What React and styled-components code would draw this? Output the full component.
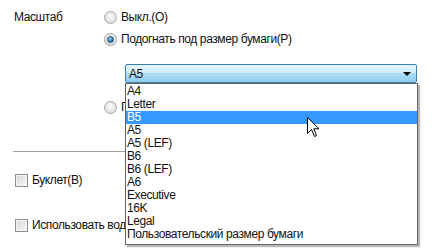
import React from 'react'
import styled, { createGlobalStyle } from 'styled-components'

const GlobalStyle = createGlobalStyle`
  body {
    margin: 0;
    background: #fff;
    font-family: "Liberation Sans", Arial, sans-serif;
    font-size: 12px;
    letter-spacing: -0.4px;
    color: #111;
  }
`;

const Page = styled.div`
  position: relative;
  width: 432px;
  height: 252px;
  overflow: hidden;
  padding: 10px 0 0 14px;
  box-sizing: border-box;
`;

const ScaleRow = styled.div`
  display: grid;
  grid-template-columns: 90px 1fr;
`;

const Label = styled.div`
  height: 14px;
  line-height: 14px;
`;

const Options = styled.div`
  display: flex;
  flex-direction: column;
`;

const OptionRow = styled.label`
  display: flex;
  align-items: center;
  gap: 4px;
  height: 14px;
  line-height: 14px;
  margin-top: ${p => p.$gap || 0}px;
  white-space: nowrap;
`;

const Radio = styled.span`
  width: 11px;
  height: 11px;
  border-radius: 50%;
  border: 1px solid #a7a7a7;
  background: radial-gradient(circle at 50% 40%, #fbfbfb 0%, #e6e6e6 55%, #cfcfcf 100%);
  display: flex;
  align-items: center;
  justify-content: center;
  flex: none;

  &::after {
    content: '';
    display: ${p => (p.$checked ? 'block' : 'none')};
    width: 5px;
    height: 5px;
    border-radius: 50%;
    border: 1px solid #1d4f72;
    background: radial-gradient(circle at 40% 35%, #9ad6f2 0%, #2f7fb3 60%, #164a70 100%);
  }
`;

const ComboWrap = styled.div`
  position: relative;
  margin: 18px 0 0 21px;
  width: 292px;
  z-index: 2;
`;

const Combo = styled.div`
  height: 17px;
  border: 1px solid #3c7fb1;
  border-radius: 2px;
  background: linear-gradient(#e3f4fc 0%, #d0ecfb 45%, #aedcf6 50%, #8fcdf0 100%);
  display: flex;
  align-items: center;
  justify-content: space-between;
  padding: 0 4px 0 3px;
`;

const Arrow = styled.span`
  width: 0;
  height: 0;
  border-left: 4px solid transparent;
  border-right: 4px solid transparent;
  border-top: 4px solid #000;
  margin-right: 1px;
`;

const List = styled.ul`
  position: absolute;
  top: 100%;
  left: 0;
  right: -1px;
  margin: 0;
  padding: 1px 0 3px;
  list-style: none;
  background: #fff;
  border: 1px solid #646464;
  box-shadow: 2px 2px 1px rgba(0, 0, 0, 0.28);
`;

const Item = styled.li`
  height: 13px;
  line-height: 13px;
  padding-left: 1px;
  white-space: nowrap;
  background: ${p => (p.$active ? '#3399ff' : 'transparent')};
  color: ${p => (p.$active ? '#fff' : '#111')};
`;

const Separator = styled.div`
  height: 1px;
  width: 380px;
  background: #a0a0a0;
  margin: 37px 0 0 -1px;
`;

const CheckRow = styled.label`
  display: flex;
  align-items: center;
  gap: 4px;
  height: 14px;
  line-height: 14px;
  margin-top: ${p => p.$gap}px;
  margin-left: 1px;
  white-space: nowrap;
`;

const Box = styled.span`
  width: 11px;
  height: 11px;
  border: 1px solid #8f8f8f;
  background: linear-gradient(135deg, #d4d4d4 0%, #ececec 60%, #f8f8f8 100%);
  box-shadow: inset 0 0 0 1px #f4f4f4;
  flex: none;
`;

const Cursor = styled.svg`
  position: absolute;
  left: 307px;
  top: 117px;
  z-index: 3;
`;

const sizes = [
  'A4', 'Letter', 'B5', 'A5', 'A5 (LEF)', 'B6', 'B6 (LEF)', 'A6',
  'Executive', '16K', 'Legal', 'Пользовательский размер бумаги',
]

const App = () => (
  <Page>
    <GlobalStyle />
    <ScaleRow>
      <Label>Масштаб</Label>
      <Options>
        <OptionRow><Radio />Выкл.(O)</OptionRow>
        <OptionRow $gap={8}><Radio $checked />Подогнать под размер бумаги(P)</OptionRow>
        <ComboWrap>
          <Combo>
            <span>A5</span>
            <Arrow />
          </Combo>
          <List>
            {sizes.map(s => (
              <Item key={s} $active={s === 'B5'}>{s}</Item>
            ))}
          </List>
        </ComboWrap>
        <OptionRow $gap={17}><Radio />По размеру(Z)</OptionRow>
      </Options>
    </ScaleRow>
    <Separator />
    <CheckRow $gap={21}><Box />Буклет(B)</CheckRow>
    <CheckRow $gap={31}><Box />Использовать водяной знак</CheckRow>
    <Cursor width="13" height="21" viewBox="0 0 13 21">
      <path d="M0.5 0.5 L0.5 16.5 L4.5 12.5 L7.5 19.5 L9.5 18.5 L6.8 11.8 L12 11.8 Z" fill="#fff" stroke="#000" strokeWidth="1" strokeLinejoin="round" />
    </Cursor>
  </Page>
)

export default App
